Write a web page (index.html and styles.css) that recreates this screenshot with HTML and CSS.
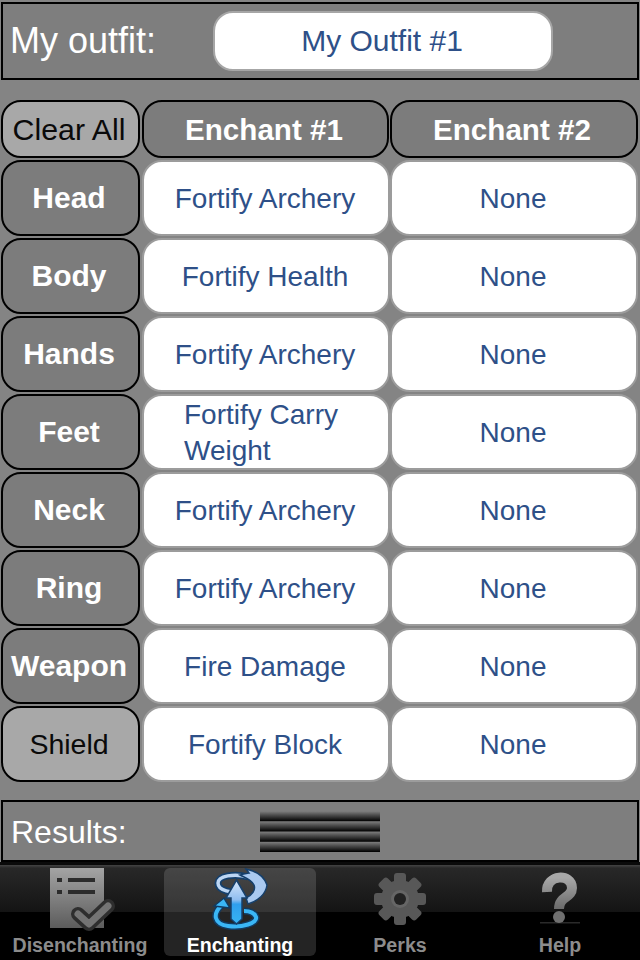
FILE: index.html
```html
<!DOCTYPE html>
<html lang="en">
<head>
    <meta charset="UTF-8">
    <meta name="viewport" content="width=device-width, initial-scale=1.0">
    <title>Enchanting</title>
    <link rel="stylesheet" href="styles.css">
</head>
<body>
    <div class="panel outfit">
        <span class="panel-label">My outfit:</span>
        <div class="outfit-name">My Outfit #1</div>
    </div>

    <div class="table">
        <div class="slot slot-on clear">Clear All</div>
        <div class="head head-first">Enchant #1</div>
        <div class="head">Enchant #2</div>

        <div class="slot">Head</div>
        <div class="cell">Fortify Archery</div>
        <div class="cell">None</div>

        <div class="slot">Body</div>
        <div class="cell">Fortify Health</div>
        <div class="cell">None</div>

        <div class="slot">Hands</div>
        <div class="cell">Fortify Archery</div>
        <div class="cell">None</div>

        <div class="slot">Feet</div>
        <div class="cell"><span class="cell-wrap">Fortify Carry Weight</span></div>
        <div class="cell">None</div>

        <div class="slot">Neck</div>
        <div class="cell">Fortify Archery</div>
        <div class="cell">None</div>

        <div class="slot">Ring</div>
        <div class="cell">Fortify Archery</div>
        <div class="cell">None</div>

        <div class="slot">Weapon</div>
        <div class="cell">Fire Damage</div>
        <div class="cell">None</div>

        <div class="slot slot-on">Shield</div>
        <div class="cell">Fortify Block</div>
        <div class="cell">None</div>
    </div>

    <div class="panel results">
        <span class="panel-label results-label">Results:</span>
        <div class="stripes"></div>
    </div>

    <div class="tabbar">
        <div class="tab">
            <svg class="tab-icon" width="100" height="65" viewBox="0 0 100 65">
                <defs>
                    <linearGradient id="grayFill" x1="0" y1="0" x2="0" y2="1">
                        <stop offset="0" stop-color="#a4a4a4"/>
                        <stop offset="1" stop-color="#5c5c5c"/>
                    </linearGradient>
                </defs>
                <rect x="20" y="0" width="54" height="60" fill="url(#grayFill)"/>
                <rect x="27" y="10" width="5" height="4" fill="#2c2c2c"/>
                <rect x="38" y="10" width="27" height="4" fill="#2c2c2c"/>
                <rect x="27" y="22" width="5" height="4" fill="#2c2c2c"/>
                <rect x="38" y="22" width="27" height="4" fill="#2c2c2c"/>
                <path d="M48 46 L59 56 L78 38" fill="none" stroke="#2e2e2e" stroke-width="14" stroke-linejoin="round" stroke-linecap="round"/>
                <path d="M48 46 L59 56 L78 38" fill="none" stroke="#747474" stroke-width="7" stroke-linejoin="round" stroke-linecap="round"/>
            </svg>
            <span class="tab-label">Disenchanting</span>
        </div>
        <div class="tab tab-on">
            <svg class="tab-icon" width="100" height="65" viewBox="0 0 100 65">
                <defs>
                    <linearGradient id="blueFill" x1="0" y1="0" x2="0" y2="1">
                        <stop offset="0" stop-color="#d6e6fa"/>
                        <stop offset="0.45" stop-color="#8fbdf0"/>
                        <stop offset="0.55" stop-color="#2f9fee"/>
                        <stop offset="1" stop-color="#37b4f4"/>
                    </linearGradient>
                </defs>
                <path d="M58 9 C44 5 28 8 28 15 C28 23 42 25 52 24" fill="none" stroke="#16406c" stroke-width="7"/>
                <path d="M58 9 C44 5 28 8 28 15 C28 23 42 25 52 24" fill="none" stroke="#bcd6f4" stroke-width="3.5"/>
                <path d="M50 7 C54 6 58 5 59 5 L56 1 C66 3 74 8 77 17 C76 26 68 33 58 36 L56 30 C62 27 66 22 64 17 C62 12 56 10 50 7 Z" fill="#a9c9f0" stroke="#16406c" stroke-width="1.5"/>
                <path d="M32 37 C22 46 24 56 38 58 C52 60 68 55 66 49 C64 44 58 43 54 43" fill="none" stroke="#123a60" stroke-width="7"/>
                <path d="M32 37 C22 46 24 56 38 58 C52 60 68 55 66 49 C64 44 58 43 54 43" fill="none" stroke="#3ab6f6" stroke-width="4"/>
                <path d="M24 38 L34 30 L40 40 Z" fill="#3ab6f6" stroke="#123a60" stroke-width="1.5"/>
                <path d="M46.5 12 L57 30 L52 30 L52 51 L46.5 56 L41 51 L41 30 L36 30 Z" fill="url(#blueFill)" stroke="#16406c" stroke-width="1.5"/>
            </svg>
            <span class="tab-label">Enchanting</span>
        </div>
        <div class="tab">
            <svg class="tab-icon" width="100" height="65" viewBox="0 0 100 65">
                <g fill="#585858">
                    <circle cx="50" cy="31" r="19"/>
                    <rect x="44" y="5" width="12" height="52" rx="3"/>
                    <rect x="44" y="5" width="12" height="52" rx="3" transform="rotate(45 50 31)"/>
                    <rect x="44" y="5" width="12" height="52" rx="3" transform="rotate(90 50 31)"/>
                    <rect x="44" y="5" width="12" height="52" rx="3" transform="rotate(135 50 31)"/>
                </g>
                <circle cx="50" cy="31" r="9" fill="#666"/>
                <circle cx="50" cy="31" r="6" fill="#222"/>
            </svg>
            <span class="tab-label">Perks</span>
        </div>
        <div class="tab">
            <svg class="tab-icon" width="100" height="65" viewBox="0 0 100 65">
                <defs>
                    <linearGradient id="helpFill" x1="0" y1="0" x2="0" y2="1">
                        <stop offset="0" stop-color="#a8a8a8"/>
                        <stop offset="1" stop-color="#6a6a6a"/>
                    </linearGradient>
                </defs>
                <rect x="30" y="54" width="40" height="1.5" fill="#2a2a2a"/>
                <path d="M37 24 C36 6 62 5 62 20 C62 30 49 28 49 41" fill="none" stroke="url(#helpFill)" stroke-width="10"/>
                <circle cx="49" cy="49" r="6" fill="#707070"/>
            </svg>
            <span class="tab-label">Help</span>
        </div>
    </div>
</body>
</html>
```

FILE: styles.css
```css
* {
    box-sizing: border-box;
}

body {
    font-family: "Liberation Sans", Arial, sans-serif;
    background-color: #848484;
    margin: 0;
    padding: 0;
    width: 640px;
    height: 960px;
    overflow: hidden;
}

.panel {
    display: flex;
    align-items: center;
    margin: 0 1px;
    border: 2px solid #000;
    background-color: #7e7e7e;
    color: white;
}

.panel-label {
    font-size: 36px;
    line-height: 40px;
}

.outfit {
    height: 78px;
    margin-top: 2px;
    padding-left: 7px;
}

.outfit-name {
    width: 340px;
    height: 60px;
    margin-left: 57px;
    background-color: white;
    border: 2px solid #a6a6a6;
    border-radius: 20px;
    color: #2e5088;
    font-size: 30px;
    padding-right: 2px;
    padding-bottom: 1px;
    display: flex;
    align-items: center;
    justify-content: center;
}

.table {
    display: grid;
    grid-template-columns: 141px 248px 248px;
    grid-template-rows: 58px repeat(8, 76px);
    row-gap: 2px;
    padding-left: 1px;
    margin-top: 20px;
}

.slot,
.head {
    display: flex;
    align-items: center;
    justify-content: center;
    border: 2px solid #000;
    border-radius: 20px;
    background-color: #7c7c7c;
    color: white;
    font-size: 29.6px;
    font-weight: bold;
}

.head {
    padding-top: 1px;
    padding-right: 4px;
}

.slot {
    margin-right: 2px;
    padding-right: 3px;
    font-size: 30px;
}

.slot-on {
    background-color: #a8a8a8;
    color: #0a0a0a;
    font-size: 28.5px;
    font-weight: normal;
    padding-top: 1px;
}

.clear {
    font-size: 30.3px;
}

.head-first {
    margin-right: 1px;
    padding-right: 3px;
}

.cell {
    display: flex;
    align-items: center;
    justify-content: center;
    background-color: white;
    border: 2px solid #9c9c9c;
    border-radius: 20px;
    color: #2e5088;
    font-size: 28px;
    line-height: 36px;
    padding-top: 1px;
    padding-right: 2px;
}

.cell-wrap {
    width: 160px;
    margin-right: 2px;
}

.results {
    height: 62px;
    margin-top: 18px;
    padding-left: 8px;
}

.results-label {
    font-size: 32px;
    padding-top: 2px;
}

.stripes {
    width: 120px;
    height: 41px;
    margin-left: 133px;
    background-image: linear-gradient(#808080, #000);
    background-size: 100% 10.25px;
}

.tabbar {
    display: grid;
    grid-template-columns: repeat(4, 160px);
    height: 98px;
    border-top: 3px solid #0a0a0a;
    padding-top: 3px;
    background-image: linear-gradient(#444 0, #282828 3px, #141414 47px, #000 47px);
}

.tab {
    display: flex;
    flex-direction: column;
    align-items: center;
    height: 88px;
    border-radius: 6px;
    color: #8c8c8c;
}

.tab-on {
    margin-left: 4px;
    margin-right: 4px;
    background-color: rgba(255, 255, 255, 0.14);
    color: white;
}

.tab-icon {
    display: block;
    flex-shrink: 0;
    filter: blur(0.5px);
}

.tab-label {
    font-size: 19.6px;
    font-weight: bold;
    line-height: 24px;
}
```
